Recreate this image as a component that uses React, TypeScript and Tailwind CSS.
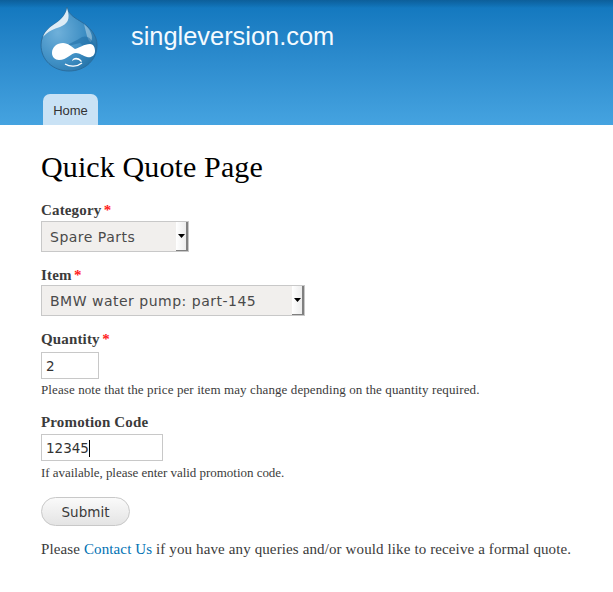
function Drop() {
  return (
    <svg width="58" height="65" viewBox="0 0 58 65" className="block">
      <defs>
        <radialGradient id="g" cx="0.3" cy="0.4" r="0.85">
          <stop offset="0" stopColor="#6fb0da" />
          <stop offset="0.55" stopColor="#3f8fc4" />
          <stop offset="1" stopColor="#1d6a9f" />
        </radialGradient>
      </defs>
      <path d="M27 0C28 6 33 10 40 14C50 20 57 28 57 38C57 53 45 64 29 64C13 64 1 53 1 38C1 27 9 20 16 16C22 12 26 7 27 0Z" fill="url(#g)" stroke="#2a6d9e" strokeWidth="1" />
      <path d="M27 1C26 7 22 12 16 16C10 20 5 24 3 30C8 24 14 22 20 20C27 17 31 13 27 1Z" fill="#e8f2f9" opacity="0.92" />
      <path d="M44 17C50 22 54 29 51 35C48 36 46 25 44 17Z" fill="#d5e8f4" opacity="0.45" />
      <path d="M24 40C30 36 36 34 42 30C48 28 52 32 55 40L55 50L40 36Z" fill="#1f6ea6" opacity="0.55" />
      <path d="M12 46C12 40 17 36 23 36C28 36 32 40 35 42C39 41 44 37 50 37C54 37 55 41 55 44C55 49 51 51 47 50C43 49 40 46 36 46C31 46 27 53 19 53C15 53 12 50 12 46Z" fill="#ffffff" />
      <path d="M32 54C33 50 38 50 41 53C42 54 42 55 41 55C38 52 35 52 32 54Z" fill="#ffffff" />
      <path d="M25 57C30 60 37 60 42 56" fill="none" stroke="#ffffff" strokeWidth="1.4" />
    </svg>
  );
}

function Label({ text, required }: { text: string; required?: boolean }) {
  return (
    <div className="text-[15px] leading-[19px] font-bold text-[#3b3b3b] tracking-[0.15px]">
      {text}
      {required && <span className="text-[#ff2020] ml-[2.5px]">*</span>}
    </div>
  );
}

function Select({ value, width }: { value: string; width: string }) {
  return (
    <div className={`${width} h-[31px] flex border border-[#c8c8c8] bg-[#f1efed] font-['DejaVu_Sans',sans-serif] text-[14px] text-[#4a4a4a]`}>
      <div className="flex-1 flex items-center pl-[8px] pt-[1px] tracking-[0.5px]">{value}</div>
      <div className="w-[12px] flex items-center justify-center bg-gradient-to-r from-[#ffffff] to-[#ececec] border-r-2 border-b border-[#808080]">
        <svg width="7" height="4" viewBox="0 0 7 4"><path d="M0 0H7L3.5 4Z" fill="#000000" /></svg>
      </div>
    </div>
  );
}

export default function App() {
  return (
    <div className="w-[613px] h-[592px] bg-white overflow-hidden font-['Liberation_Serif',serif]">
      <header className="h-[125px] bg-gradient-to-b from-[#0f76bd] to-[#45a3e0] relative flex flex-col">
        <div className="absolute inset-x-0 top-0 h-[8px] bg-gradient-to-b from-[#0d5f9a] to-transparent" />
        <div className="flex h-[94px] pl-[40px]">
          <div className="pt-[7px] relative"><Drop /></div>
          <div className="ml-[33px] pt-[20px] font-['Liberation_Sans',sans-serif] text-[25.4px] leading-[32px] text-[#f4faff] relative">singleversion.com</div>
        </div>
        <div className="pl-[43px]">
          <div className="w-[55px] h-[31px] pt-[2px] bg-[#c9e2f5] rounded-t-[7px] flex items-center justify-center font-['Liberation_Sans',sans-serif] text-[13px] text-[#333333]">Home</div>
        </div>
      </header>
      <main className="pl-[41px]">
        <h1 className="mt-[24px] text-[30px] leading-[36px] text-black tracking-[0.12px]">Quick Quote Page</h1>
        <div className="mt-[16px]"><Label text="Category" required /></div>
        <div className="mt-[1px]"><Select value="Spare Parts" width="w-[148px]" /></div>
        <div className="mt-[14px]"><Label text="Item" required /></div>
        <div><Select value="BMW water pump: part-145" width="w-[264px]" /></div>
        <div className="mt-[14px]"><Label text="Quantity" required /></div>
        <div className="mt-[3px] w-[58px] h-[27px] border border-[#c8c8c8] flex items-center pl-[4px] pt-[2px] font-['DejaVu_Sans',sans-serif] text-[13.5px] text-[#333333]">2</div>
        <p className="mt-[2px] text-[13px] leading-[18px] text-[#3b3b3b] tracking-[0.1px]">Please note that the price per item may change depending on the quantity required.</p>
        <div className="mt-[14px]"><Label text="Promotion Code" /></div>
        <div className="mt-[2px] w-[122px] h-[27px] border border-[#c8c8c8] flex items-center pl-[4px] pt-[1px] font-['DejaVu_Sans',sans-serif] text-[13.5px] text-[#333333]">
          12345<span className="w-px h-[17px] bg-black" />
        </div>
        <p className="mt-[3px] text-[13px] leading-[18px] text-[#3b3b3b] tracking-[-0.03px]">If available, please enter valid promotion code.</p>
        <button className="mt-[15px] block w-[89px] h-[29px] pt-[1px] rounded-[15px] border border-[#c8c8c8] bg-gradient-to-b from-[#fafafa] to-[#e4e4e4] font-['DejaVu_Sans',sans-serif] text-[13.5px] text-[#3a3a3a]">Submit</button>
        <p className="mt-[13px] text-[15px] leading-[20px] text-[#3b3b3b] tracking-[0.12px] whitespace-nowrap">
          Please <span className="text-[#0071b3]">Contact Us</span> if you have any queries and/or would like to receive a formal quote.
        </p>
      </main>
    </div>
  );
}
